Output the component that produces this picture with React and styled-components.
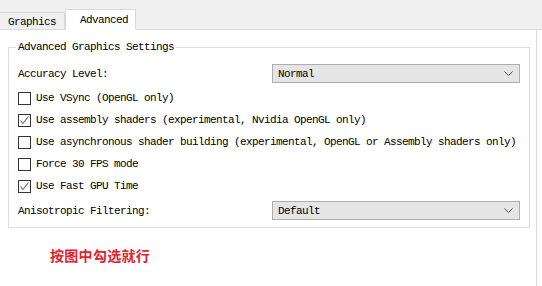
import React from 'react';
import styled, { createGlobalStyle } from 'styled-components';

const GlobalStyle = createGlobalStyle`
  body {
    margin: 0;
    background: #fff;
    font-family: "Liberation Mono", "DejaVu Sans Mono", monospace;
    font-size: 11px;
    letter-spacing: -0.6px;
    color: #000;
  }
`;

// tab strip
const TabBar = styled.div`
  height: 30px;
  background: #f0f0f0;
  display: flex;
  align-items: flex-end;
  border-bottom: 1px solid #d9d9d9;
  box-sizing: border-box;
`;

const Tab = styled.div`
  box-sizing: border-box;
  height: ${(p) => (p.active ? '21px' : '17px')};
  width: ${(p) => p.width}px;
  padding-left: ${(p) => (p.active ? '14px' : '8px')};
  padding-top: ${(p) => (p.active ? '0' : '1px')};
  display: flex;
  align-items: center;
  background: ${(p) => (p.active ? '#fff' : '#f0f0f0')};
  border: 1px solid #d9d9d9;
  border-bottom: ${(p) => (p.active ? '1px solid #fff' : 'none')};
  border-left: ${(p) => (p.active ? '1px solid #d9d9d9' : 'none')};
  margin-bottom: ${(p) => (p.active ? '-1px' : '0')};
`;

const Panel = styled.div`
  width: 537px;
  box-sizing: border-box;
  height: 256px;
  border-right: 1px solid #d9d9d9;
  padding: 10px 6px 0 8px;
`;

const Group = styled.fieldset`
  margin: 0;
  padding: 0 9px 7px 9px;
  border: 1px solid #dcdcdc;
  width: 522px;
  box-sizing: border-box;
`;

const Legend = styled.legend`
  padding: 0 2px;
  margin-left: -2px;
  line-height: 14px;
`;

const ComboRow = styled.div`
  display: flex;
  align-items: center;
  justify-content: space-between;
  height: 19px;
  margin-top: ${(p) => p.top}px;
`;

const Combo = styled.div`
  box-sizing: border-box;
  width: 248px;
  height: 19px;
  background: #e5e5e5;
  border: 1px solid #adadad;
  display: flex;
  align-items: center;
  justify-content: space-between;
  padding: 0 6px 0 5px;
`;

const CheckList = styled.div`
  margin-top: 4px;
  margin-bottom: 4px;
`;

const CheckRow = styled.label`
  display: flex;
  align-items: center;
  height: 22px;
  gap: 5px;
`;

const Box = styled.span`
  box-sizing: border-box;
  width: 13px;
  height: 13px;
  border: 1px solid #333;
  background: #fff;
  display: flex;
  align-items: center;
  justify-content: center;
`;

const Note = styled.div`
  margin: 17px 0 0 42px;
  font-family: "Noto Sans CJK SC", sans-serif;
  font-weight: 700;
  font-size: 14px;
  letter-spacing: 0.3px;
  color: #e0242c;
`;

const Chevron = () => (
  <svg width="9" height="5" viewBox="0 0 9 5">
    <path d="M0.5 0.5 L4.5 4.5 L8.5 0.5" fill="none" stroke="#555" strokeWidth="1" />
  </svg>
);

const Check = () => (
  <svg width="11" height="11" viewBox="0 0 11 11">
    <path d="M1.5 5.5 L4 8.5 L9.5 1.5" fill="none" stroke="#666" strokeWidth="1.1" />
  </svg>
);

const options = [
  { label: 'Use VSync (OpenGL only)', checked: false },
  { label: 'Use assembly shaders (experimental, Nvidia OpenGL only)', checked: true },
  {
    label: 'Use asynchronous shader building (experimental, OpenGL or Assembly shaders only)',
    checked: false,
  },
  { label: 'Force 30 FPS mode', checked: false },
  { label: 'Use Fast GPU Time', checked: true },
];

const App = () => {
  return (
    <>
      <GlobalStyle />
      <TabBar>
        <Tab width={65}>Graphics</Tab>
        <Tab width={71} active>
          Advanced
        </Tab>
      </TabBar>
      <Panel>
        <Group>
          <Legend>Advanced Graphics Settings</Legend>
          <ComboRow top={10}>
            <span>Accuracy Level:</span>
            <Combo>
              <span>Normal</span>
              <Chevron />
            </Combo>
          </ComboRow>
          <CheckList>
            {options.map((opt, index) => (
              <CheckRow key={index}>
                <Box>{opt.checked && <Check />}</Box>
                <span>{opt.label}</span>
              </CheckRow>
            ))}
          </CheckList>
          <ComboRow top={0}>
            <span>Anisotropic Filtering:</span>
            <Combo>
              <span>Default</span>
              <Chevron />
            </Combo>
          </ComboRow>
        </Group>
        <Note>按图中勾选就行</Note>
      </Panel>
    </>
  );
};

export default App;
